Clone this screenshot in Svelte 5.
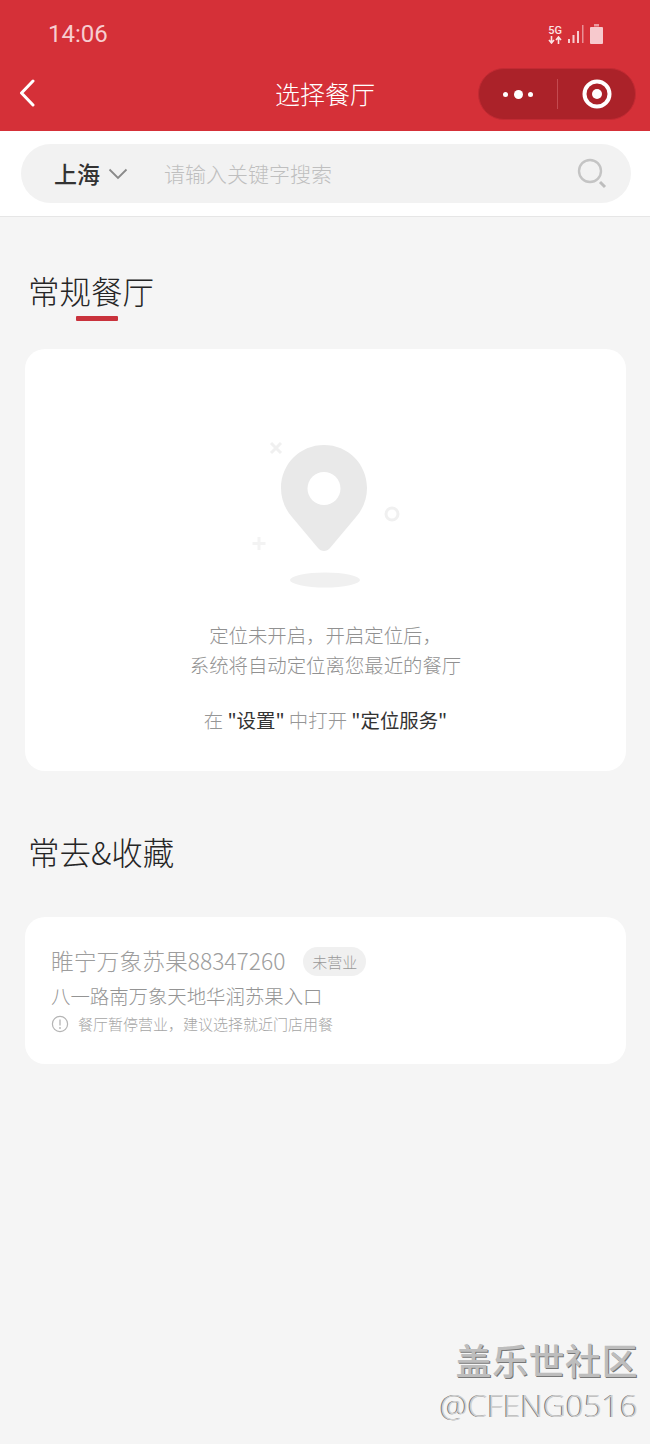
<script lang="ts">
    const city = "上海";
    const store = {
        name: "睢宁万象苏果88347260",
        status: "未营业",
        address: "八一路南万象天地华润苏果入口",
        notice: "餐厅暂停营业\uFF0C建议选择就近门店用餐",
    };
</script>

<div class="page">
    <header class="top">
        <div class="status">
            <span class="clock">14:06</span>
            <div class="indicators">
                <div class="net">
                    <span class="net-label">5G</span>
                    <svg class="net-arrows" width="14" height="8" viewBox="0 0 14 8" aria-hidden="true">
                        <path d="M3.5 0v6M1 4l2.5 3L6 4M10.5 8V2M8 4l2.5-3L13 4" fill="none" stroke="currentColor" stroke-width="1.6" />
                    </svg>
                </div>
                <svg width="18" height="20" viewBox="0 0 18 20" aria-hidden="true">
                    <path d="M1 15h2v4H1zM5.5 11h2v8h-2zM10 7h2v12h-2z" fill="#f7cdd0" />
                    <path d="M15 1h1.5v18H15z" fill="#e98f95" />
                </svg>
                <svg width="13" height="20" viewBox="0 0 13 20" aria-hidden="true">
                    <path d="M4 0h5v2.5H4z" fill="#ea9aa0" />
                    <rect x="0" y="3" width="13" height="17" rx="1" fill="#f7c9cd" />
                </svg>
            </div>
        </div>
        <nav class="bar">
            <svg class="back" width="18" height="28" viewBox="0 0 18 28" aria-hidden="true">
                <path d="M15 2 3.5 14 15 26" fill="none" stroke="#fff" stroke-width="3" stroke-linecap="round" stroke-linejoin="round" />
            </svg>
            <h1>选择餐厅</h1>
            <div class="capsule">
                <div class="dots"><i></i><i class="big"></i><i></i></div>
                <span class="divider"></span>
                <svg width="30" height="30" viewBox="0 0 30 30" aria-hidden="true">
                    <circle cx="15" cy="15" r="12.5" fill="none" stroke="#fff" stroke-width="4" />
                    <circle cx="15" cy="15" r="5" fill="#fff" />
                </svg>
            </div>
        </nav>
    </header>

    <section class="search">
        <div class="pill">
            <span class="city">{city}</span>
            <svg class="chevron" width="20" height="12" viewBox="0 0 20 12" aria-hidden="true">
                <path d="M1.5 1.5 10 10l8.5-8.5" fill="none" stroke="#8a8a8a" stroke-width="1.8" />
            </svg>
            <span class="placeholder">请输入关键字搜索</span>
            <svg class="lens" width="32" height="32" viewBox="0 0 32 32" aria-hidden="true">
                <circle cx="14" cy="13" r="11" fill="none" stroke="#c4c4c4" stroke-width="2.4" />
                <path d="M24 24l5 5" stroke="#bdbdbd" stroke-width="3" />
            </svg>
        </div>
    </section>

    <main>
        <h2 class="first">常规餐厅</h2>
        <div class="rule"></div>

        <div class="card empty">
            <svg class="pin" width="190" height="180" viewBox="0 0 190 180" aria-hidden="true">
                <path d="M41 23l10 10m0-10-10 10" stroke="#f0f0f0" stroke-width="3" />
                <path d="M29 117v13m-6.5-6.5h13" stroke="#f3f3f3" stroke-width="3" />
                <circle cx="162" cy="94" r="6" fill="none" stroke="#f0f0f0" stroke-width="3" />
                <path fill-rule="evenodd" fill="#e9e9e9" d="M94 25c24 0 43 19 43 43 0 11-4 21-11 29l-26 31c-3 4-9 4-12 0L62 97c-7-8-11-18-11-29 0-24 19-43 43-43Zm0 27a16.5 16.5 0 1 0 0 33 16.5 16.5 0 0 0 0-33Z" />
                <ellipse cx="95" cy="160" rx="35" ry="7.5" fill="#f0f0f0" />
            </svg>
            <p class="hint">定位未开启&#xFF0C;开启定位后&#xFF0C;</p>
            <p class="hint">系统将自动定位离您最近的餐厅</p>
            <p class="hint action">在 <b>"设置"</b> 中打开 <b>"定位服务"</b></p>
        </div>

        <h2 class="second">常去&amp;收藏</h2>

        <div class="card store">
            <div class="store-head">
                <span class="store-name">{store.name}</span>
                <span class="badge">{store.status}</span>
            </div>
            <div class="address">{store.address}</div>
            <div class="notice">
                <svg width="18" height="18" viewBox="0 0 18 18" aria-hidden="true">
                    <circle cx="9" cy="9" r="7.6" fill="none" stroke="#b4b4b4" stroke-width="1.2" />
                    <path d="M9 4.5v6" stroke="#b4b4b4" stroke-width="1.3" />
                    <circle cx="9" cy="13" r=".9" fill="#b4b4b4" />
                </svg>
                <span>{store.notice}</span>
            </div>
        </div>
    </main>

    <div class="mark">
        <div class="mark-name">盖乐世社区</div>
        <div class="mark-user">@CFENG0516</div>
    </div>
</div>

<style>
    :global(body) {
        margin: 0;
        background: #f5f5f5;
    }

    .page {
        position: relative;
        width: 650px;
        height: 1444px;
        overflow: hidden;
        background: #f5f5f5;
        font-family: "Noto Sans CJK SC", "Noto Sans", sans-serif;
        font-weight: 300;
    }

    .top {
        background: #d53038;
        height: 131px;
    }

    .status {
        height: 68px;
        display: flex;
        align-items: center;
        justify-content: space-between;
        padding: 0 47px 0 48px;
    }

    .clock {
        font-family: Roboto, sans-serif;
        font-weight: 400;
        font-size: 24px;
        color: #f7cdd0;
    }

    .indicators {
        display: flex;
        align-items: flex-end;
        gap: 5px;
    }

    .net {
        display: flex;
        flex-direction: column;
        align-items: center;
        color: #fbe3e4;
    }

    .net-label {
        font-family: Roboto, sans-serif;
        font-weight: 500;
        font-size: 11px;
        line-height: 11px;
    }

    .bar {
        position: relative;
        height: 63px;
        display: flex;
        align-items: center;
        justify-content: center;
    }

    .back {
        position: absolute;
        left: 18px;
        top: 11px;
    }

    h1 {
        margin: 0 0 14px;
        font-size: 25px;
        font-weight: 300;
        line-height: 36px;
        color: #fff;
    }

    .capsule {
        position: absolute;
        left: 478px;
        top: 0;
        width: 158px;
        height: 52px;
        box-sizing: border-box;
        display: flex;
        align-items: center;
        border-radius: 26px;
        background: #ab2229;
        border: 1px solid #c22a33;
    }

    .dots {
        width: 78px;
        display: flex;
        align-items: center;
        justify-content: center;
        gap: 5.5px;
    }

    .dots i {
        width: 5px;
        height: 5px;
        border-radius: 50%;
        background: #fff;
    }

    .dots i.big {
        width: 9px;
        height: 9px;
    }

    .divider {
        width: 1px;
        height: 30px;
        background: #c44a50;
        margin-right: 24px;
    }

    .search {
        height: 86px;
        box-sizing: border-box;
        padding: 13px 19px 0 21px;
        background: #fff;
        border-bottom: 1px solid #e6e6e6;
    }

    .pill {
        height: 59px;
        display: flex;
        align-items: center;
        padding: 0 23px 0 33px;
        border-radius: 30px;
        background: #f2f2f2;
    }

    .city {
        margin-bottom: 2px;
        font-size: 23px;
        font-weight: 500;
        color: #333;
    }

    .chevron {
        margin-left: 8px;
    }

    .placeholder {
        flex: 1;
        margin: 0 0 2px 36px;
        font-size: 21px;
        color: #bfbfbf;
    }

    main {
        padding: 0 24px 0 25px;
    }

    h2 {
        margin: 0;
        font-size: 31.5px;
        font-weight: 300;
        line-height: 44px;
        color: #262626;
    }

    h2.first {
        padding: 51px 0 0 3px;
    }

    h2.second {
        padding: 58px 0 0 3px;
    }

    .rule {
        width: 42px;
        height: 5px;
        margin: 4px 0 28px 51px;
        border-radius: 1px;
        background: #c9323c;
    }

    .card {
        background: #fff;
        border-radius: 20px;
    }

    .empty {
        height: 422px;
        box-sizing: border-box;
        display: flex;
        flex-direction: column;
        align-items: center;
        padding-top: 71px;
    }

    .pin {
        display: block;
        margin: 0 2px 20px 0;
    }

    .hint {
        margin: 0;
        font-size: 19.4px;
        line-height: 30px;
        color: #919191;
    }

    .action {
        margin-top: 25px;
        color: #969696;
    }

    .action b {
        font-weight: 400;
        color: #333;
    }

    .store {
        height: 147px;
        box-sizing: border-box;
        margin-top: 44px;
        padding: 28px 26px 0;
    }

    .store-head {
        display: flex;
        align-items: center;
        gap: 18px;
        height: 33px;
    }

    .store-name {
        margin-bottom: 3px;
        font-size: 22.8px;
        color: #9d9d9d;
    }

    .badge {
        width: 63px;
        height: 29px;
        display: flex;
        align-items: center;
        justify-content: center;
        border-radius: 15px;
        background: #f0f0f0;
        font-size: 15px;
        color: #999;
    }

    .address {
        margin-top: 3px;
        font-size: 19.4px;
        line-height: 30px;
        color: #949494;
    }

    .notice {
        display: flex;
        align-items: center;
        gap: 9px;
        margin-top: 1px;
        font-size: 15px;
        line-height: 24px;
        color: #a6a6a6;
    }

    .mark {
        position: absolute;
        right: 12px;
        top: 1336px;
        text-align: right;
        color: #bdbdbd;
        text-shadow: 1px 1px 0 #777;
    }

    .mark-name {
        font-size: 36px;
        line-height: 46px;
        font-weight: 500;
        letter-spacing: 0.5px;
    }

    .mark-user {
        font-family: "Open Sans", sans-serif;
        font-weight: 300;
        font-size: 31.5px;
        line-height: 46px;
        color: #d0d0d0;
        text-shadow: -1px 0 0 #777;
    }
</style>
